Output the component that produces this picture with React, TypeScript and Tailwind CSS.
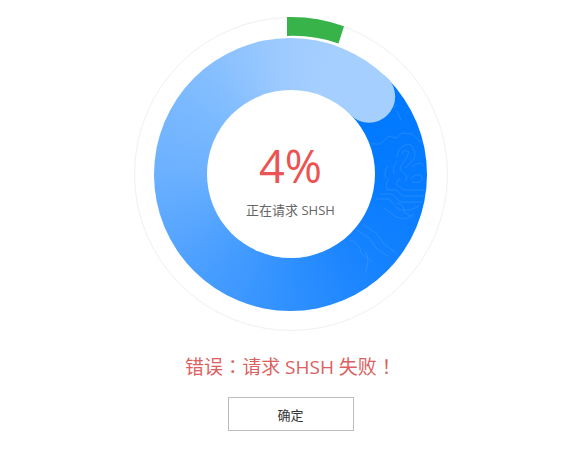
import { useState } from "react";

const contourLines = [
  "M371 144 L380 144 L389 136 L396 138 L402 133 L412 134 L422 143",
  "M397 157 Q398 147 406 145 Q412 142 414 151 Q417 157 411 162 L405 168",
  "M402 154 Q404 148 409 152 Q407 158 403 163 Q397 169 404 173 Q409 177 405 181",
  "M394 174 Q392 165 398 161 M412 167 Q420 160 424 166",
  "M386 178 Q383 171 388 166 M388 190 Q384 184 389 179",
  "M411 178 Q420 171 423 179 Q419 184 412 182",
  "M400 178 L396 184 L404 190 L427 190",
  "M386 190 L397 190 L402 196 L425 196",
  "M380 194 L392 194 L400 202 L423 202",
  "M376 199 L389 199 L399 210 L411 210 L419 206",
  "M397 203 Q405 205 404 212 L412 217",
  "M384 208 L396 217 L406 219 L414 214",
  "M364 225 L376 233 L384 244 L396 253",
  "M357 230 L369 238 L377 249 L388 256",
  "M350 240 Q360 243 361 253 L372 262",
  "M366 252 Q370 261 365 273",
  "M394 108 L397 104 M397 111 L401 120",
];

type ProgressRingProps = {
  percent: number;
  status: string;
};

const ProgressRing = ({ percent, status }: ProgressRingProps) => {
  return (
    <div
      role="progressbar"
      aria-label={status}
      aria-valuenow={percent}
      aria-valuemin={0}
      aria-valuemax={100}
      className="grid size-79 place-items-center *:[grid-area:1/1]"
    >
      {/* Blue track */}
      <div className="size-[273px] rounded-full bg-[conic-gradient(from_45deg,#0079fe_0deg,#067bff_50deg,#1582ff_90deg,#2f90ff_135deg,#4b9fff_180deg,#6bb0ff_225deg,#80bcff_270deg,#9dcaff_310deg,#a5cfff_335deg,#a5cfff_360deg)]" />
      <div className="size-42 rounded-full bg-white" />

      {/* Rim, round cap, contour pattern and green segment */}
      <svg viewBox="133 16 316 316" className="size-full" fill="none" aria-hidden="true">
        <circle cx="291" cy="174" r="156.5" stroke="#f0f0f0" />
        <circle cx="369" cy="96.5" r="26.2" fill="#a5cfff" />
        <g stroke="#5eabff" strokeWidth="0.8" opacity="0.4">
          {contourLines.map((d) => (
            <path key={d} d={d} />
          ))}
        </g>
        <path
          d="M287 17 A157 157 0 0 1 344 26.2 L338.5 43.5 A139 139 0 0 0 287 36 Z"
          fill="#38b34a"
        />
      </svg>

      <div className="flex flex-col items-center pt-3">
        <span className="font-['Open_Sans','Noto_Sans',sans-serif] text-[45px] leading-13 text-[#ec5353]">
          {percent}%
        </span>
        <span className="mt-2 text-[13px] leading-5 text-[#666]">{status}</span>
      </div>
    </div>
  );
};

const App = () => {
  const [confirmed, setConfirmed] = useState(false);

  return (
    <main className="flex min-h-screen flex-col items-center bg-white pt-4 pr-1 font-['Open_Sans','Noto_Sans_CJK_SC',sans-serif]">
      <ProgressRing percent={4} status="正在请求 SHSH" />

      <p role="alert" className="mt-5 text-[19px] leading-7 text-[#dc6060]">
        错误<span className="font-['Noto_Sans_CJK_TC',sans-serif]">：</span>请求 SHSH 失败
        <span className="font-['Noto_Sans_CJK_TC',sans-serif]">！</span>
      </p>

      <button
        type="button"
        disabled={confirmed}
        onClick={() => setConfirmed(true)}
        className="mt-4 h-[34px] w-[126px] border border-[#bdbdbd] bg-white pt-1 text-[13px] text-[#333] hover:bg-gray-50"
      >
        确定
      </button>
    </main>
  );
};

export default App;
